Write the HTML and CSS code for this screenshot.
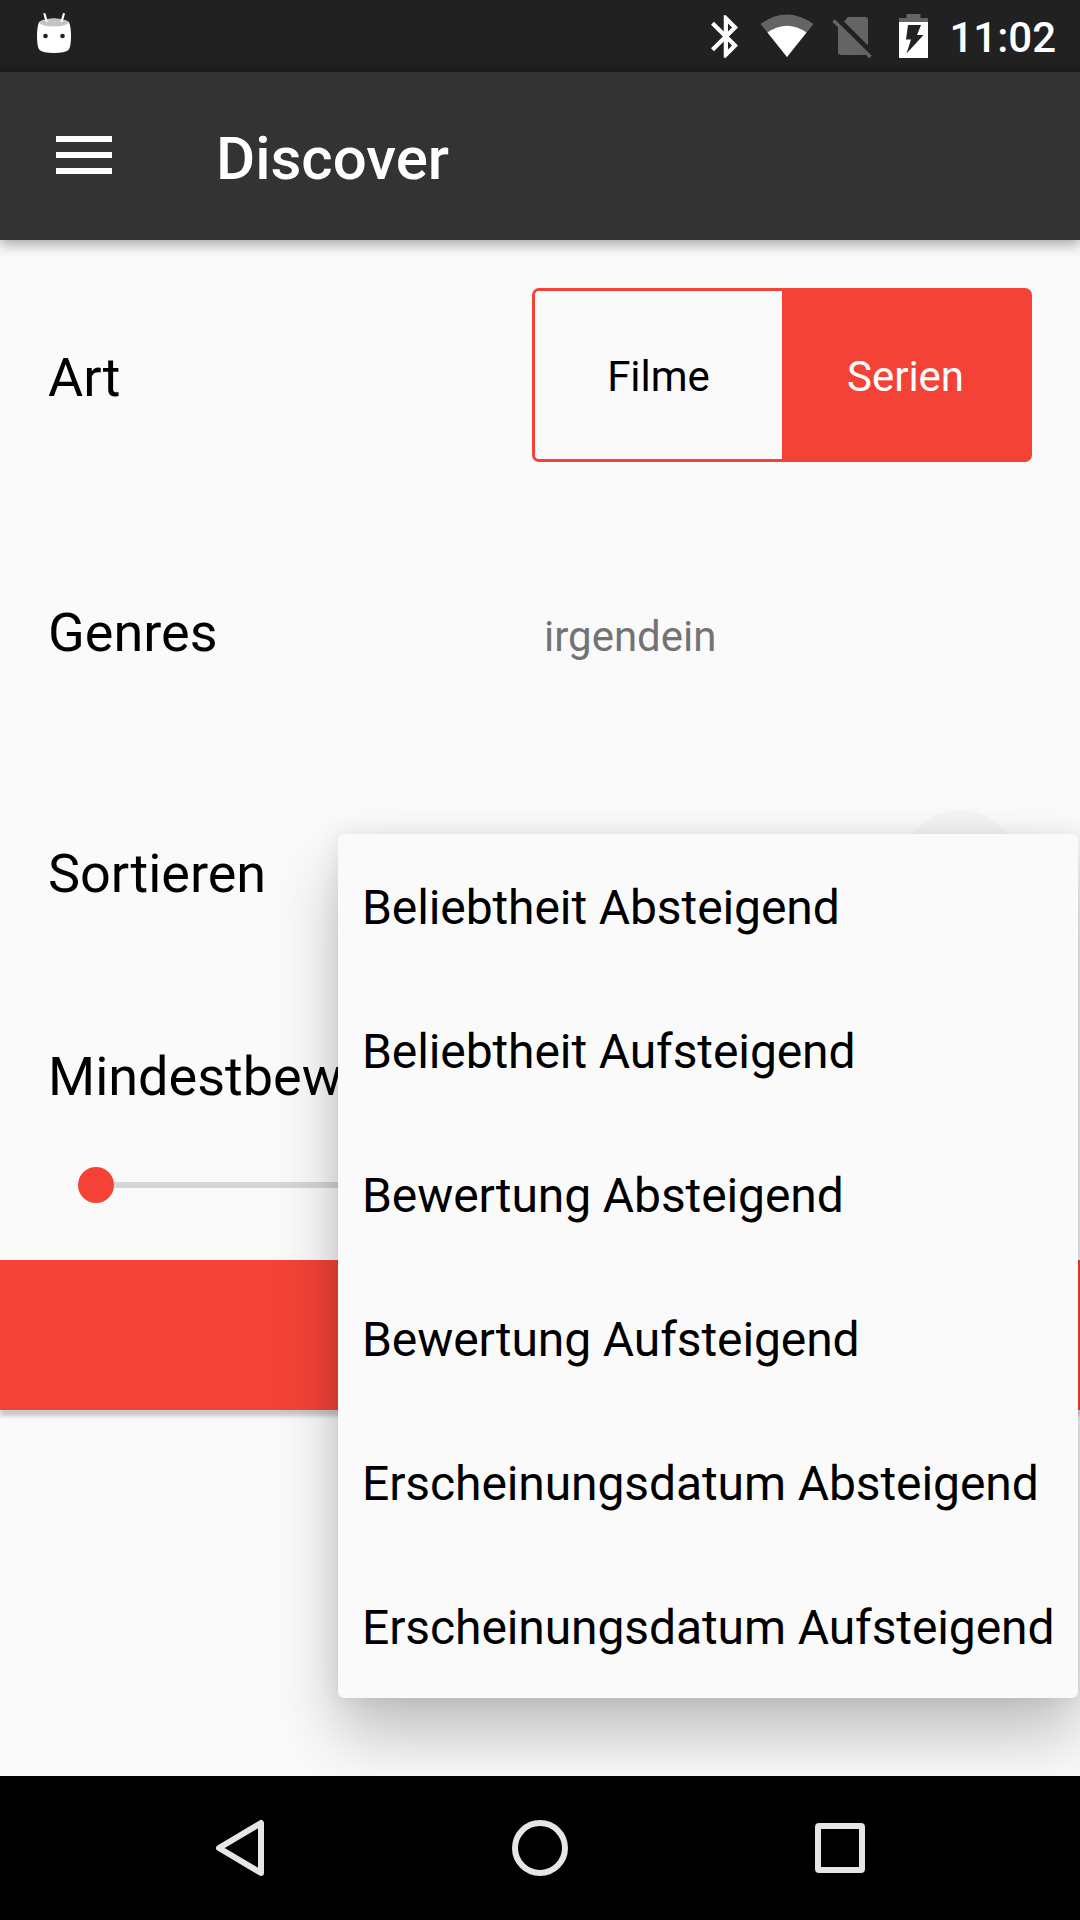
FILE: index.html
```html
<!DOCTYPE html>
<html lang="de">
<head>
<meta charset="utf-8">
<title>Discover</title>
<link rel="stylesheet" href="styles.css">
</head>
<body>
<div class="screen">
  <header class="top">
    <div class="status">
      <svg class="notification" width="36" height="42" viewBox="0 0 36 42">
        <path d="M3 10 Q18 3 33 10 Q35 15 35 24 Q35 35 32.500 38 Q29 41 18 41 Q7 41 3.500 38 Q1 35 1 24 Q1 15 3 10Z" fill="#fff"/>
        <ellipse cx="18" cy="10.500" rx="14.500" ry="4" fill="#c4c4c4"/>
        <path d="M8.500 2 L10.500 9 M27.800 2 L25.800 9" stroke="#fff" stroke-width="2.200" stroke-linecap="round"/>
        <circle cx="9.500" cy="24" r="2.300" fill="#212121"/><circle cx="26.500" cy="24" r="2.300" fill="#212121"/>
      </svg>
      <svg class="bluetooth" width="27" height="43" viewBox="5 2 12.710 20">
        <path d="M17.710 7.710L12 2h-1v7.590L6.410 5 5 6.410 10.590 12 5 17.590 6.410 19 11 14.410V22h1l5.710-5.710-4.300-4.290 4.300-4.290zM13 5.830l1.880 1.880L13 9.590V5.830zm1.880 10.460L13 18.170v-3.760l1.880 1.880z" fill="#fff"/>
      </svg>
      <svg class="wifi" width="54" height="44" viewBox="0 0 54 44">
        <path d="M27 43 L0.500 10 Q27 -9 53.500 10Z" fill="#646464"/>
        <path d="M27 43 L7.500 18.500 Q27 5 46.500 18.500Z" fill="#fff"/>
      </svg>
      <svg class="sim" width="40" height="42" viewBox="0 0 40 42">
        <path d="M12 5.500 L16 1 H33 Q36 1 36 4 V29.500Z M6 10.500 L34 38.500 Q33 39 32 39 H9 Q6 39 6 36Z" fill="#646464"/>
        <path d="M1.500 4.500 L38.500 41" stroke="#646464" stroke-width="3.600"/>
      </svg>
      <svg class="battery" width="30" height="44" viewBox="0 0 30 44">
        <path d="M0 8 V4 H7.500 V0 H21.500 V4 H29 V8Z" fill="#646464"/>
        <path d="M0 8 H29 V44 H0Z" fill="#fff"/>
        <path d="M9 11 H22 L18 21 H24.500 L7.500 39.500 L12 25.500 H7Z" fill="#212121"/>
      </svg>
      <span class="time">11:02</span>
    </div>
    <div class="appbar">
      <svg class="menu-icon" width="56" height="38" viewBox="0 0 56 38"><path d="M0 0H56V6H0Z M0 16H56V22H0Z M0 32H56V38H0Z" fill="#fff"/></svg>
      <h1 class="title">Discover</h1>
    </div>
  </header>

  <main class="content">
    <div class="row row-type">
      <span class="label">Art</span>
      <div class="segments">
        <span class="segment">Filme</span>
        <span class="segment selected">Serien</span>
      </div>
    </div>
    <div class="row row-genres">
      <span class="label">Genres</span>
      <span class="hint">irgendein</span>
    </div>
    <div class="row row-sort">
      <span class="label">Sortieren</span>
      <span class="ripple"></span>
    </div>
    <div class="row row-rating">
      <span class="label">Mindestbew</span>
    </div>
    <div class="slider"><span class="thumb"></span><span class="track"></span></div>
    <div class="submit"></div>
    <ul class="popup">
      <li>Beliebtheit Absteigend</li>
      <li>Beliebtheit Aufsteigend</li>
      <li>Bewertung Absteigend</li>
      <li>Bewertung Aufsteigend</li>
      <li>Erscheinungsdatum Absteigend</li>
      <li>Erscheinungsdatum Aufsteigend</li>
    </ul>
  </main>

  <nav class="navbar">
    <svg width="60" height="60" viewBox="0 0 60 60"><path d="M51 5 V55 L9 30Z" fill="none" stroke="#e6e6e6" stroke-width="6" stroke-linejoin="round"/></svg>
    <svg width="60" height="60" viewBox="0 0 60 60"><circle cx="30" cy="30" r="25" fill="none" stroke="#e6e6e6" stroke-width="6"/></svg>
    <svg width="60" height="60" viewBox="0 0 60 60"><rect x="8" y="8" width="44" height="44" rx="1" fill="none" stroke="#e6e6e6" stroke-width="6" stroke-linejoin="round"/></svg>
  </nav>
</div>
</body>
</html>
```
FILE: styles.css
```css
* { box-sizing: border-box; }
body { margin: 0; font-family: Roboto, sans-serif; color: #000; }
.screen { width: 1080px; height: 1920px; display: flex; flex-direction: column; background: #fafafa; overflow: hidden; }

.top { position: relative; z-index: 1; box-shadow: 0 5px 12px rgba(0, 0, 0, .32); }
.status { height: 72px; padding: 12px 24px 0 36px; display: flex; align-items: flex-start; background: linear-gradient(#212121 62px, #1b1b1b); color: #fff; }
.notification { margin-right: auto; }
.bluetooth { margin: 3px 22px 0 0; }
.wifi { margin: 2px 18px 0 0; }
.sim { margin: 4px 27px 0 0; }
.battery { margin: 2px 20px 0 0; }
.time { padding-top: 1px; font-size: 42px; line-height: 50px; font-weight: 500; }
.appbar { height: 168px; padding-left: 56px; display: flex; align-items: center; background: #333; color: #fff; }
.menu-icon { margin-bottom: 2px; }
.title { margin: 0 0 0 104px; padding-top: .102em; font-size: 60px; line-height: 72px; font-weight: 500; }

.content { position: relative; flex: 1; }
.row { display: flex; align-items: center; padding: 0 48px; }
.label { width: 484px; padding-top: .102em; font-size: 54px; line-height: 64px; }
.row-type { height: 270px; }
.row-genres { height: 240px; }
.row-sort { height: 240px; padding-top: 2px; position: relative; }
.row-rating { height: 168px; padding-top: 1px; }

.segments { width: 500px; height: 174px; display: flex; border: 3px solid #f44336; border-radius: 7px; background: #f44336; overflow: hidden; }
.segment { flex: 1; display: flex; align-items: center; justify-content: center; padding-top: 2px; font-size: 42px; background: #fafafa; }
.segment.selected { background: #f44336; color: #fff; }
.hint { padding: 12px 0 0 12px; font-size: 42px; color: #737373; }
.ripple { position: absolute; left: 900px; top: 60px; width: 120px; height: 120px; border-radius: 50%; background: rgba(0, 0, 0, .025); }

.slider { display: flex; align-items: center; height: 102px; padding: 0 78px 48px; }
.thumb { width: 36px; height: 36px; border-radius: 50%; background: #f44336; }
.track { flex: 1; height: 6px; background: #d6d6d6; }
.submit { height: 150px; background: #f44336; box-shadow: 0 6px 4px rgba(0, 0, 0, .2); }

.popup { position: absolute; left: 338px; top: 594px; width: 740px; margin: 0; padding: 0; list-style: none; background: #fafafa; border-radius: 6px; box-shadow: 0 36px 64px rgba(0, 0, 0, .24), 0 0 24px rgba(0, 0, 0, .08); }
.popup li { height: 144px; padding: 3px 0 0 24px; display: flex; align-items: center; font-size: 48px; letter-spacing: -.1px; white-space: nowrap; }

.navbar { position: relative; z-index: 1; height: 144px; padding: 0 210px; display: flex; align-items: center; justify-content: space-between; background: #000; }
```
